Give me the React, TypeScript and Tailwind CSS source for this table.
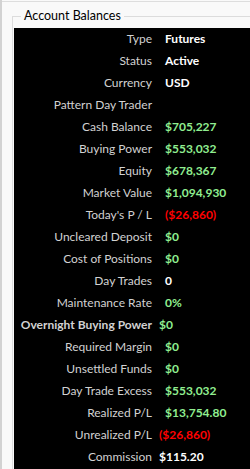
import React from "react";

type Row = {
  label: string;
  value?: string;
  tone?: "white" | "green" | "red";
  boldLabel?: boolean;
  nudge?: boolean;
};

const rows: Row[] = [
  { label: "Type", value: "Futures", tone: "white" },
  { label: "Status", value: "Active", tone: "white" },
  { label: "Currency", value: "USD", tone: "white" },
  { label: "Pattern Day Trader" },
  { label: "Cash Balance", value: "$705,227", tone: "green" },
  { label: "Buying Power", value: "$553,032", tone: "green" },
  { label: "Equity", value: "$678,367", tone: "green" },
  { label: "Market Value", value: "$1,094,930", tone: "green" },
  { label: "Today's P / L", value: "($26,860)", tone: "red" },
  { label: "Uncleared Deposit", value: "$0", tone: "green" },
  { label: "Cost of Positions", value: "$0", tone: "green" },
  { label: "Day Trades", value: "0", tone: "white" },
  { label: "Maintenance Rate", value: "0%", tone: "green" },
  { label: "Overnight Buying Power", value: "$0", tone: "green", boldLabel: true, nudge: true },
  { label: "Required Margin", value: "$0", tone: "green" },
  { label: "Unsettled Funds", value: "$0", tone: "green" },
  { label: "Day Trade Excess", value: "$553,032", tone: "green" },
  { label: "Realized P/L", value: "$13,754.80", tone: "green" },
  { label: "Unrealized P/L", value: "($26,860)", tone: "red", nudge: true },
  { label: "Commission", value: "$115.20", tone: "white", nudge: true },
];

const toneClass = {
  white: "text-white",
  green: "text-[#90ee90]",
  red: "text-[#ff0000]",
};

export default function App() {
  return (
    <div className="w-[250px] h-[469px] overflow-hidden bg-[#f9f9f9] border-l-2 border-[#d2d2d2] flex flex-col font-['Lato',sans-serif] text-[12px]">
      {/* top separator */}
      <div className="mt-px h-px bg-[#dddddd]" />

      {/* group box */}
      <div className="relative ml-[10px] mt-[14px] flex-1 border-l border-t border-[#dcdcdc] pt-[11px] pl-px">
        <span className="absolute -top-[10px] left-[8px] bg-[#f9f9f9] px-[3px] leading-[18px] text-[12.5px] text-black">
          Account Balances
        </span>

        <div className="h-full bg-black">
          {rows.map((r) => (
            <div key={r.label} className="flex h-[22px] items-center">
              <div
                className={`w-[138px] shrink-0 text-right whitespace-nowrap text-[#d2d2d2] ${
                  r.boldLabel ? "font-bold" : ""
                } ${r.nudge ? "-mr-[3px]" : ""}`}
              >
                {r.label}
              </div>
              <div
                className={`whitespace-nowrap font-bold ${r.nudge ? "ml-[10px]" : "ml-[13px]"} ${
                  r.tone ? toneClass[r.tone] : ""
                }`}
              >
                {r.value}
              </div>
            </div>
          ))}
        </div>
      </div>
    </div>
  );
}
